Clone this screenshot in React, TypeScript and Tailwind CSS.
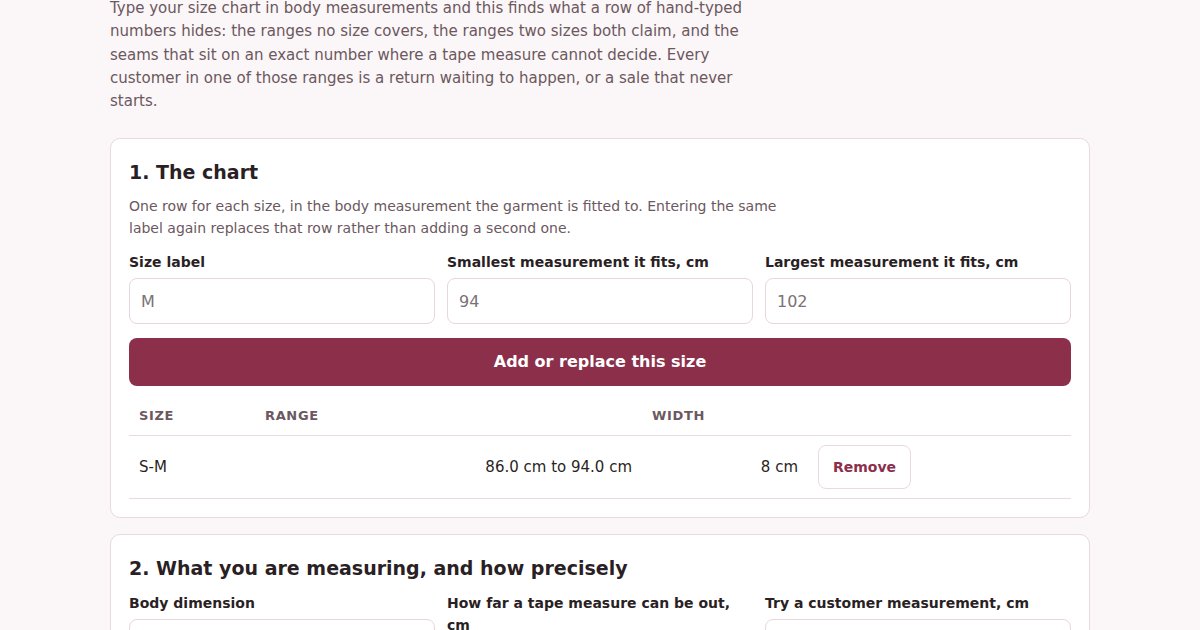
import React from "react";

const font = { fontFamily: '"DejaVu Sans", Verdana, sans-serif' };

function Field({ label, placeholder }: { label: string; placeholder?: string }) {
  return (
    <label className="flex flex-col">
      <span className="text-[14px] font-bold leading-[22px] text-[#2a1f24]">{label}</span>
      <input
        placeholder={placeholder}
        className="mt-[5px] h-[46px] w-full rounded-[8px] border border-[#e8d6dc] bg-white px-[11px] text-[16px] text-[#2a1f24] outline-none placeholder:text-[#7a7275]"
      />
    </label>
  );
}

export default function App() {
  return (
    <div className="min-h-screen bg-[#fbf6f7] text-[#2a1f24]" style={font}>
      <div className="mx-auto w-[980px] pb-10">
        <p className="-mt-[3px] mb-[25px] max-w-[645px] text-[15px] leading-[23.3px] text-[#6b5860]">
          Type your size chart in body measurements and this finds what a row of hand-typed
          numbers hides: the ranges no size covers, the ranges two sizes both claim, and the
          seams that sit on an exact number where a tape measure cannot decide. Every customer in
          one of those ranges is a return waiting to happen, or a sale that never starts.
        </p>

        <section className="rounded-[10px] border border-[#ead9de] bg-white px-[18px] pt-[19px] pb-[18px]">
          <h2 className="text-[19px] font-bold leading-[28px]">1. The chart</h2>
          <p className="mt-[9px] max-w-[665px] text-[14px] leading-[22px] text-[#6b5860]">
            One row for each size, in the body measurement the garment is fitted to. Entering the
            same label again replaces that row rather than adding a second one.
          </p>
          <div className="mt-[12px] grid grid-cols-3 gap-[12px]">
            <Field label="Size label" placeholder="M" />
            <Field label="Smallest measurement it fits, cm" placeholder="94" />
            <Field label="Largest measurement it fits, cm" placeholder="102" />
          </div>
          <button className="mt-[14px] h-[48px] w-full rounded-[8px] bg-[#8b2f4b] text-[16px] font-bold text-white">
            Add or replace this size
          </button>
          <table className="mt-[11px] w-full border-collapse text-[15px]">
            <thead>
              <tr className="border-b border-[#ead9de] text-left text-[13px] font-bold uppercase tracking-[0.05em] text-[#6b5860]">
                <th className="w-[126px] px-[10px] py-[10px] leading-[18px]">Size</th>
                <th className="w-[387px] px-[10px] py-[10px] leading-[18px]">Range</th>
                <th className="w-[166px] px-[10px] py-[10px] leading-[18px]">Width</th>
                <th className="px-[10px] py-[10px]"></th>
              </tr>
            </thead>
            <tbody>
              <tr className="border-b border-[#ead9de]">
                <td className="px-[10px] py-[9px]">S-M</td>
                <td className="px-[10px] py-[9px] text-right">86.0 cm to 94.0 cm</td>
                <td className="px-[10px] py-[9px] text-right">8 cm</td>
                <td className="px-[10px] py-[9px]">
                  <button className="h-[44px] rounded-[8px] border border-[#ead9de] bg-white px-[14px] text-[14px] font-bold text-[#8b2f4b]">
                    Remove
                  </button>
                </td>
              </tr>
            </tbody>
          </table>
        </section>

        <section className="mt-[16px] rounded-[10px] border border-[#ead9de] bg-white px-[18px] pt-[19px] pb-[18px]">
          <h2 className="text-[19px] font-bold leading-[28px]">2. What you are measuring, and how precisely</h2>
          <div className="mt-[10px] grid grid-cols-3 items-start gap-[12px]">
            <label className="flex flex-col">
              <span className="text-[14px] font-bold leading-[22px]">Body dimension</span>
              <select className="mt-[5px] h-[46px] w-full rounded-[8px] border border-[#e8d6dc] bg-white px-[11px] text-[16px]">
                <option>Chest</option>
              </select>
            </label>
            <Field label="How far a tape measure can be out, cm" placeholder="1" />
            <Field label="Try a customer measurement, cm" placeholder="96" />
          </div>
        </section>
      </div>
    </div>
  );
}
